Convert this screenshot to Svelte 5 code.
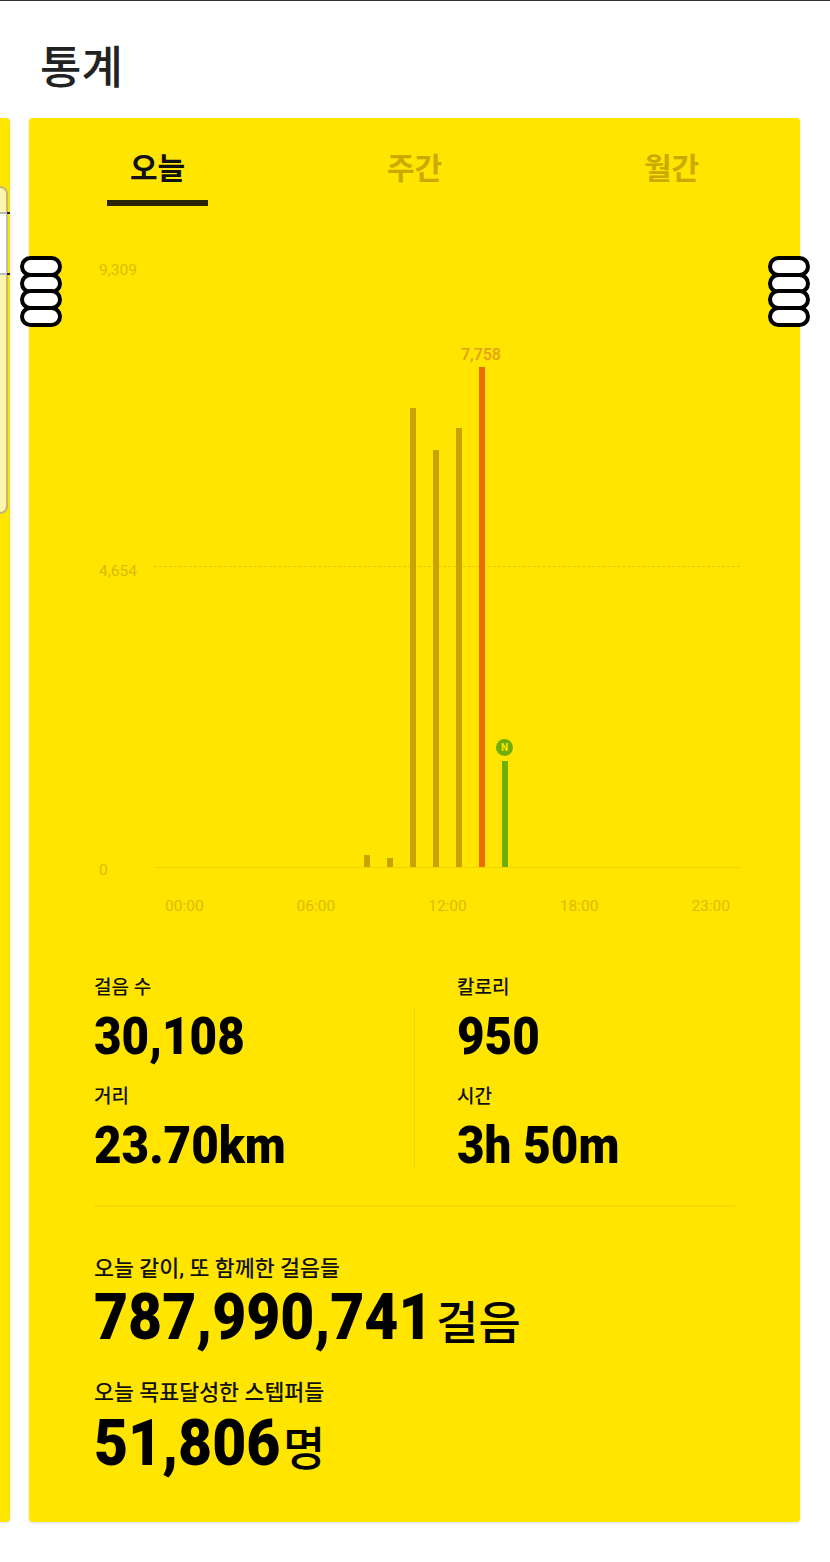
<script>
  const tabs = ['오늘', '주간', '월간'];
  const axis = ['00:00', '06:00', '12:00', '18:00', '23:00'];
  // bars: left offset inside the plot, height in px
  const bars = [
    { x: 210, h: 12, kind: 'past' },
    { x: 233, h: 9, kind: 'past' },
    { x: 256, h: 459, kind: 'past' },
    { x: 279, h: 417, kind: 'past' },
    { x: 302, h: 439, kind: 'past' },
    { x: 325, h: 500, kind: 'peak' },
    { x: 348, h: 106, kind: 'now' }
  ];
  const stats = [
    { label: '걸음 수', value: '30,108' },
    { label: '칼로리', value: '950' },
    { label: '거리', value: '23.70km' },
    { label: '시간', value: '3h 50m' }
  ];
</script>

{#snippet handle(side)}
  <div class="handle {side}">
    <span></span><span></span><span></span><span></span>
  </div>
{/snippet}

<div class="page">
  <div class="statusline"></div>
  <h1>통계</h1>

  <div class="carousel">
    <aside class="peek">
      <div class="peek-inner">
        <i class="tick one"></i>
        <i class="tick two"></i>
      </div>
    </aside>

    <section class="card">
      <nav class="tabs">
        {#each tabs as tab, i}
          <div class="tab" class:active={i === 0}>{tab}</div>
        {/each}
      </nav>

      <div class="chart">
        <span class="y top">9,309</span>
        <span class="y mid">4,654</span>
        <span class="y zero">0</span>
        <div class="plot">
          <div class="midline"></div>
          {#each bars as bar}
            <div class="bar {bar.kind}" style="left: {bar.x}px; height: {bar.h}px"></div>
          {/each}
          <span class="peak-label">7,758</span>
          <span class="now-dot">N</span>
        </div>
        <div class="axis">
          {#each axis as t}
            <span>{t}</span>
          {/each}
        </div>
      </div>

      <div class="stats">
        {#each stats as s}
          <div class="stat">
            <div class="label">{s.label}</div>
            <div class="value"><span class="num">{s.value}</span></div>
          </div>
        {/each}
        <div class="divider"></div>
      </div>

      <div class="totals">
        <div class="label">오늘 같이, 또 함께한 걸음들</div>
        <div class="big one"><span class="num">787,990,741</span><small>걸음</small></div>
        <div class="label second">오늘 목표달성한 스텝퍼들</div>
        <div class="big two"><span class="num">51,806</span><small>명</small></div>
      </div>
    </section>
  </div>

  {@render handle('left')}
  {@render handle('right')}
</div>

<style>
  :global(body) {
    margin: 0;
    background: #fff;
  }

  .page {
    position: relative;
    width: 830px;
    height: 1562px;
    overflow: hidden;
    font-family: Roboto, "Noto Sans CJK KR", sans-serif;
    color: #000;
  }

  .statusline {
    height: 1px;
    background: #333;
  }

  h1 {
    margin: 0;
    padding: 38px 0 0 40px;
    height: 81px;
    box-sizing: border-box;
    font-size: 45px;
    line-height: 60px;
    font-weight: 500;
    color: #222;
  }

  .carousel {
    display: flex;
    gap: 19px;
    margin-top: 36px;
    height: 1404px;
  }

  .peek {
    width: 10px;
    flex: none;
    background: #ffe500;
    border-radius: 0 4px 4px 0;
    box-shadow: 0 1px 3px rgba(0, 0, 0, 0.12);
    padding-top: 68px;
    box-sizing: border-box;
  }

  .peek-inner {
    position: relative;
    width: 8px;
    height: 328px;
    box-sizing: border-box;
    background: linear-gradient(#fff5ae 0, #fff5ae 26px, #fff 26px, #fff 87px, #fff5ae 87px);
    border: 2px solid rgba(120, 110, 50, 0.45);
    border-left: none;
    border-radius: 0 10px 10px 0;
  }

  .tick {
    position: absolute;
    left: 0;
    width: 10px;
    height: 2px;
    background: linear-gradient(to right, #bbb 75%, #222 75%);
  }

  .tick.one { top: 24px; }
  .tick.two { top: 85px; }

  .card {
    width: 771px;
    flex: none;
    background: #ffe500;
    border-radius: 4px;
    box-shadow: 0 1px 3px rgba(0, 0, 0, 0.14);
    box-sizing: border-box;
  }

  .tabs {
    display: grid;
    grid-template-columns: repeat(3, 1fr);
    height: 88px;
  }

  .tab {
    justify-self: center;
    width: 101px;
    height: 88px;
    box-sizing: border-box;
    padding-top: 27px;
    text-align: center;
    font-size: 30px;
    line-height: 48px;
    font-weight: 700;
    color: #c9aa00;
  }

  .tab.active {
    color: #111;
    border-bottom: 6px solid #2b2508;
  }

  .chart {
    position: relative;
    height: 760px;
  }

  .y {
    position: absolute;
    left: 70px;
    font-size: 15.5px;
    line-height: 18px;
    color: #d8bd00;
  }

  .y.top { top: 55px; }
  .y.mid { top: 356px; }
  .y.zero { top: 655px; }

  .plot {
    position: absolute;
    left: 125px;
    top: 150px;
    width: 586px;
    height: 511px;
    border-bottom: 1px solid #eed400;
  }

  .midline {
    position: absolute;
    left: 0;
    right: 0;
    top: 210px;
    border-top: 1px dashed #e3c800;
  }

  .bar {
    position: absolute;
    bottom: 0;
    width: 6px;
  }

  .past { background: #c6a500; }
  .peak { background: #ec6a00; }
  .now { background: #6fae08; }

  .peak-label {
    position: absolute;
    left: 307px;
    top: -10px;
    font-size: 16px;
    line-height: 18px;
    font-weight: 500;
    color: #e3a11a;
  }

  .now-dot {
    position: absolute;
    left: 342px;
    top: 383px;
    width: 17px;
    height: 17px;
    border-radius: 50%;
    background: #6fae08;
    color: #ffe500;
    font-size: 10px;
    line-height: 17px;
    font-weight: 700;
    text-align: center;
  }

  .axis {
    position: absolute;
    left: 136px;
    top: 691px;
    width: 565px;
    display: flex;
    justify-content: space-between;
    font-size: 15.5px;
    line-height: 18px;
    color: #d8bd00;
  }

  .stats {
    position: relative;
    display: grid;
    grid-template-columns: 363px 1fr;
    grid-auto-rows: 109px;
    margin: 0 65px;
    height: 241px;
    padding-top: 10px;
    box-sizing: border-box;
    border-bottom: 2px solid #f5da00;
  }

  .divider {
    position: absolute;
    left: 320px;
    top: 42px;
    height: 161px;
    width: 1px;
    background: #f2d800;
  }

  .label {
    font-size: 19px;
    line-height: 24px;
    font-weight: 500;
    color: #111;
  }

  /* the numbers are squeezed a little sideways in the app */
  .num {
    display: inline-block;
    font-weight: 900;
    transform-origin: left center;
    white-space: nowrap;
  }

  .value {
    font-size: 52px;
    line-height: 56px;
    margin-top: 9px;
  }

  .value .num {
    transform: scaleX(0.915);
  }

  .totals {
    padding: 48px 65px 0;
  }

  .totals .label {
    font-size: 21.7px;
    line-height: 28px;
  }

  .totals .second {
    margin-top: 20px;
  }

  .big {
    font-size: 65px;
    line-height: 72px;
    margin-top: -2px;
  }

  .big.two {
    margin-top: 0;
  }

  .big .num {
    transform: scaleX(0.905);
  }

  /* give back the width the scale took away */
  .big.one .num { margin-right: -35px; }
  .big.two .num { margin-right: -20px; }

  .big small {
    font-size: 46px;
    font-weight: 500;
    margin-left: 3px;
  }

  .handle {
    position: absolute;
    top: 256px;
    width: 42px;
    display: flex;
    flex-direction: column;
  }

  .handle.left { left: 20px; }
  .handle.right { left: 768px; }

  .handle span {
    display: block;
    box-sizing: border-box;
    height: 21px;
    margin-top: -4.3px;
    border: 4px solid #000;
    border-radius: 11px;
    background: #fff;
  }

  .handle span:first-child { margin-top: 0; }
</style>
